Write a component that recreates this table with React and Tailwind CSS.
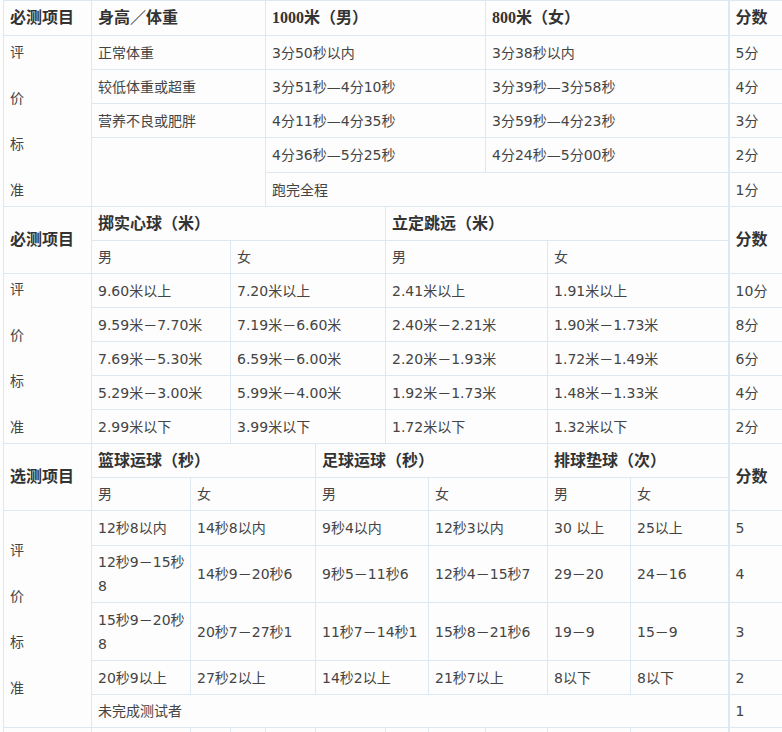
import React from 'react'

const cell = 'border border-[#dde8f3] px-[6px] py-0 align-middle text-left font-normal text-[14px] leading-[24px] text-[#444] whitespace-nowrap'
const head = 'border border-[#dde8f3] px-[6px] py-0 align-middle text-left font-bold text-[16px] leading-[24px] text-[#333] whitespace-nowrap'
const score = 'border border-[#dde8f3] border-l-2 px-[6px] py-0 align-middle text-left font-normal text-[14px] leading-[24px] text-[#444]'
const scoreHead = 'border border-[#dde8f3] border-l-2 px-[6px] py-0 align-middle text-left font-bold text-[16px] leading-[24px] text-[#333]'

const cols = [88, 99, 40, 35, 50, 70, 43, 57, 62, 83, 98, 70]

function Standard({ rows }) {
  return (
    <td rowSpan={rows} className={cell}>
      <div className="leading-[23px]">
        评<br />
        <br />
        价<br />
        <br />
        标<br />
        <br />
        准
      </div>
    </td>
  )
}

const runRows = [
  ['正常体重', '3分50秒以内', '3分38秒以内', '5分'],
  ['较低体重或超重', '3分51秒—4分10秒', '3分39秒—3分58秒', '4分'],
  ['营养不良或肥胖', '4分11秒—4分35秒', '3分59秒—4分23秒', '3分'],
]

const ballRows = [
  ['9.60米以上', '7.20米以上', '2.41米以上', '1.91米以上', '10分'],
  ['9.59米－7.70米', '7.19米－6.60米', '2.40米－2.21米', '1.90米－1.73米', '8分'],
  ['7.69米－5.30米', '6.59米－6.00米', '2.20米－1.93米', '1.72米－1.49米', '6分'],
  ['5.29米－3.00米', '5.99米－4.00米', '1.92米－1.73米', '1.48米－1.33米', '4分'],
  ['2.99米以下', '3.99米以下', '1.72米以下', '1.32米以下', '2分'],
]

const optRows = [
  { h: 'h-[35px]', c: ['12秒8以内', '14秒8以内', '9秒4以内', '12秒3以内', '30 以上', '25以上', '5'] },
  { h: 'h-[57px]', c: [<>12秒9－15秒<br />8</>, '14秒9－20秒6', '9秒5－11秒6', '12秒4－15秒7', '29－20', '24－16', '4'] },
  { h: 'h-[58px]', c: [<>15秒9－20秒<br />8</>, '20秒7－27秒1', '11秒7－14秒1', '15秒8－21秒6', '19－9', '15－9', '3'] },
  { h: 'h-[34px]', c: ['20秒9以上', '27秒2以上', '14秒2以上', '21秒7以上', '8以下', '8以下', '2'] },
]

const serifHead = { fontFamily: '"Liberation Serif", "Noto Sans CJK SC", serif' }

export default function App() {
  return (
    <div
      className="w-[782px] h-[732px] overflow-hidden bg-[#fdfdfd] pl-[3px]"
      style={{ fontFamily: '"DejaVu Sans", "Noto Sans CJK SC", sans-serif' }}
    >
      <table className="table-fixed border-collapse w-[795px]">
        <colgroup>
          {cols.map((w, i) => (
            <col key={i} style={{ width: w }} />
          ))}
        </colgroup>
        <tbody>
          {/* 必测：跑步 */}
          <tr className="h-[35px]">
            <th className={head}>必测项目</th>
            <th colSpan={3} className={head}>身高／体重</th>
            <th colSpan={4} className={head} style={serifHead}>1000米（男）</th>
            <th colSpan={3} className={head} style={serifHead}>800米（女）</th>
            <th className={scoreHead}>分数</th>
          </tr>
          {runRows.map((r, i) => (
            <tr key={i} className="h-[34px]">
              {i === 0 && <Standard rows={5} />}
              <td colSpan={3} className={cell}>{r[0]}</td>
              <td colSpan={4} className={cell}>{r[1]}</td>
              <td colSpan={3} className={cell}>{r[2]}</td>
              <td className={score}>{r[3]}</td>
            </tr>
          ))}
          <tr className="h-[35px]">
            <td colSpan={3} rowSpan={2} className={cell}></td>
            <td colSpan={4} className={cell}>4分36秒—5分25秒</td>
            <td colSpan={3} className={cell}>4分24秒—5分00秒</td>
            <td className={score}>2分</td>
          </tr>
          <tr className="h-[34px]">
            <td colSpan={7} className={cell}>跑完全程</td>
            <td className={score}>1分</td>
          </tr>

          {/* 必测：实心球 / 跳远 */}
          <tr className="h-[34px]">
            <th rowSpan={2} className={head}>必测项目</th>
            <th colSpan={5} className={head}>掷实心球（米）</th>
            <th colSpan={5} className={head}>立定跳远（米）</th>
            <th rowSpan={2} className={scoreHead}>分数</th>
          </tr>
          <tr className="h-[33px]">
            <td colSpan={2} className={cell}>男</td>
            <td colSpan={3} className={cell}>女</td>
            <td colSpan={3} className={cell}>男</td>
            <td colSpan={2} className={cell}>女</td>
          </tr>
          {ballRows.map((r, i) => (
            <tr key={i} className="h-[34px]">
              {i === 0 && <Standard rows={5} />}
              <td colSpan={2} className={cell}>{r[0]}</td>
              <td colSpan={3} className={cell}>{r[1]}</td>
              <td colSpan={3} className={cell}>{r[2]}</td>
              <td colSpan={2} className={cell}>{r[3]}</td>
              <td className={score}>{r[4]}</td>
            </tr>
          ))}

          {/* 选测 */}
          <tr className="h-[34px]">
            <th rowSpan={2} className={head}>选测项目</th>
            <th colSpan={4} className={head}>篮球运球（秒）</th>
            <th colSpan={4} className={head}>足球运球（秒）</th>
            <th colSpan={2} className={head}>排球垫球（次）</th>
            <th rowSpan={2} className={scoreHead}>分数</th>
          </tr>
          <tr className="h-[33px]">
            <td className={cell}>男</td>
            <td colSpan={3} className={cell}>女</td>
            <td colSpan={2} className={cell}>男</td>
            <td colSpan={2} className={cell}>女</td>
            <td className={cell}>男</td>
            <td className={cell}>女</td>
          </tr>
          {optRows.map((r, i) => (
            <tr key={i} className={r.h}>
              {i === 0 && <Standard rows={5} />}
              <td className={cell}>{r.c[0]}</td>
              <td colSpan={3} className={cell}>{r.c[1]}</td>
              <td colSpan={2} className={cell}>{r.c[2]}</td>
              <td colSpan={2} className={cell}>{r.c[3]}</td>
              <td className={cell}>{r.c[4]}</td>
              <td className={cell}>{r.c[5]}</td>
              <td className={score}>{r.c[6]}</td>
            </tr>
          ))}
          <tr className="h-[33px]">
            <td colSpan={10} className={cell}>未完成测试者</td>
            <td className={score}>1</td>
          </tr>

          {/* 下一张表的开头 */}
          <tr className="h-[34px]">
            {cols.map((w, i) => (
              <td key={i} className={i === cols.length - 1 ? score : cell}></td>
            ))}
          </tr>
        </tbody>
      </table>
    </div>
  )
}
